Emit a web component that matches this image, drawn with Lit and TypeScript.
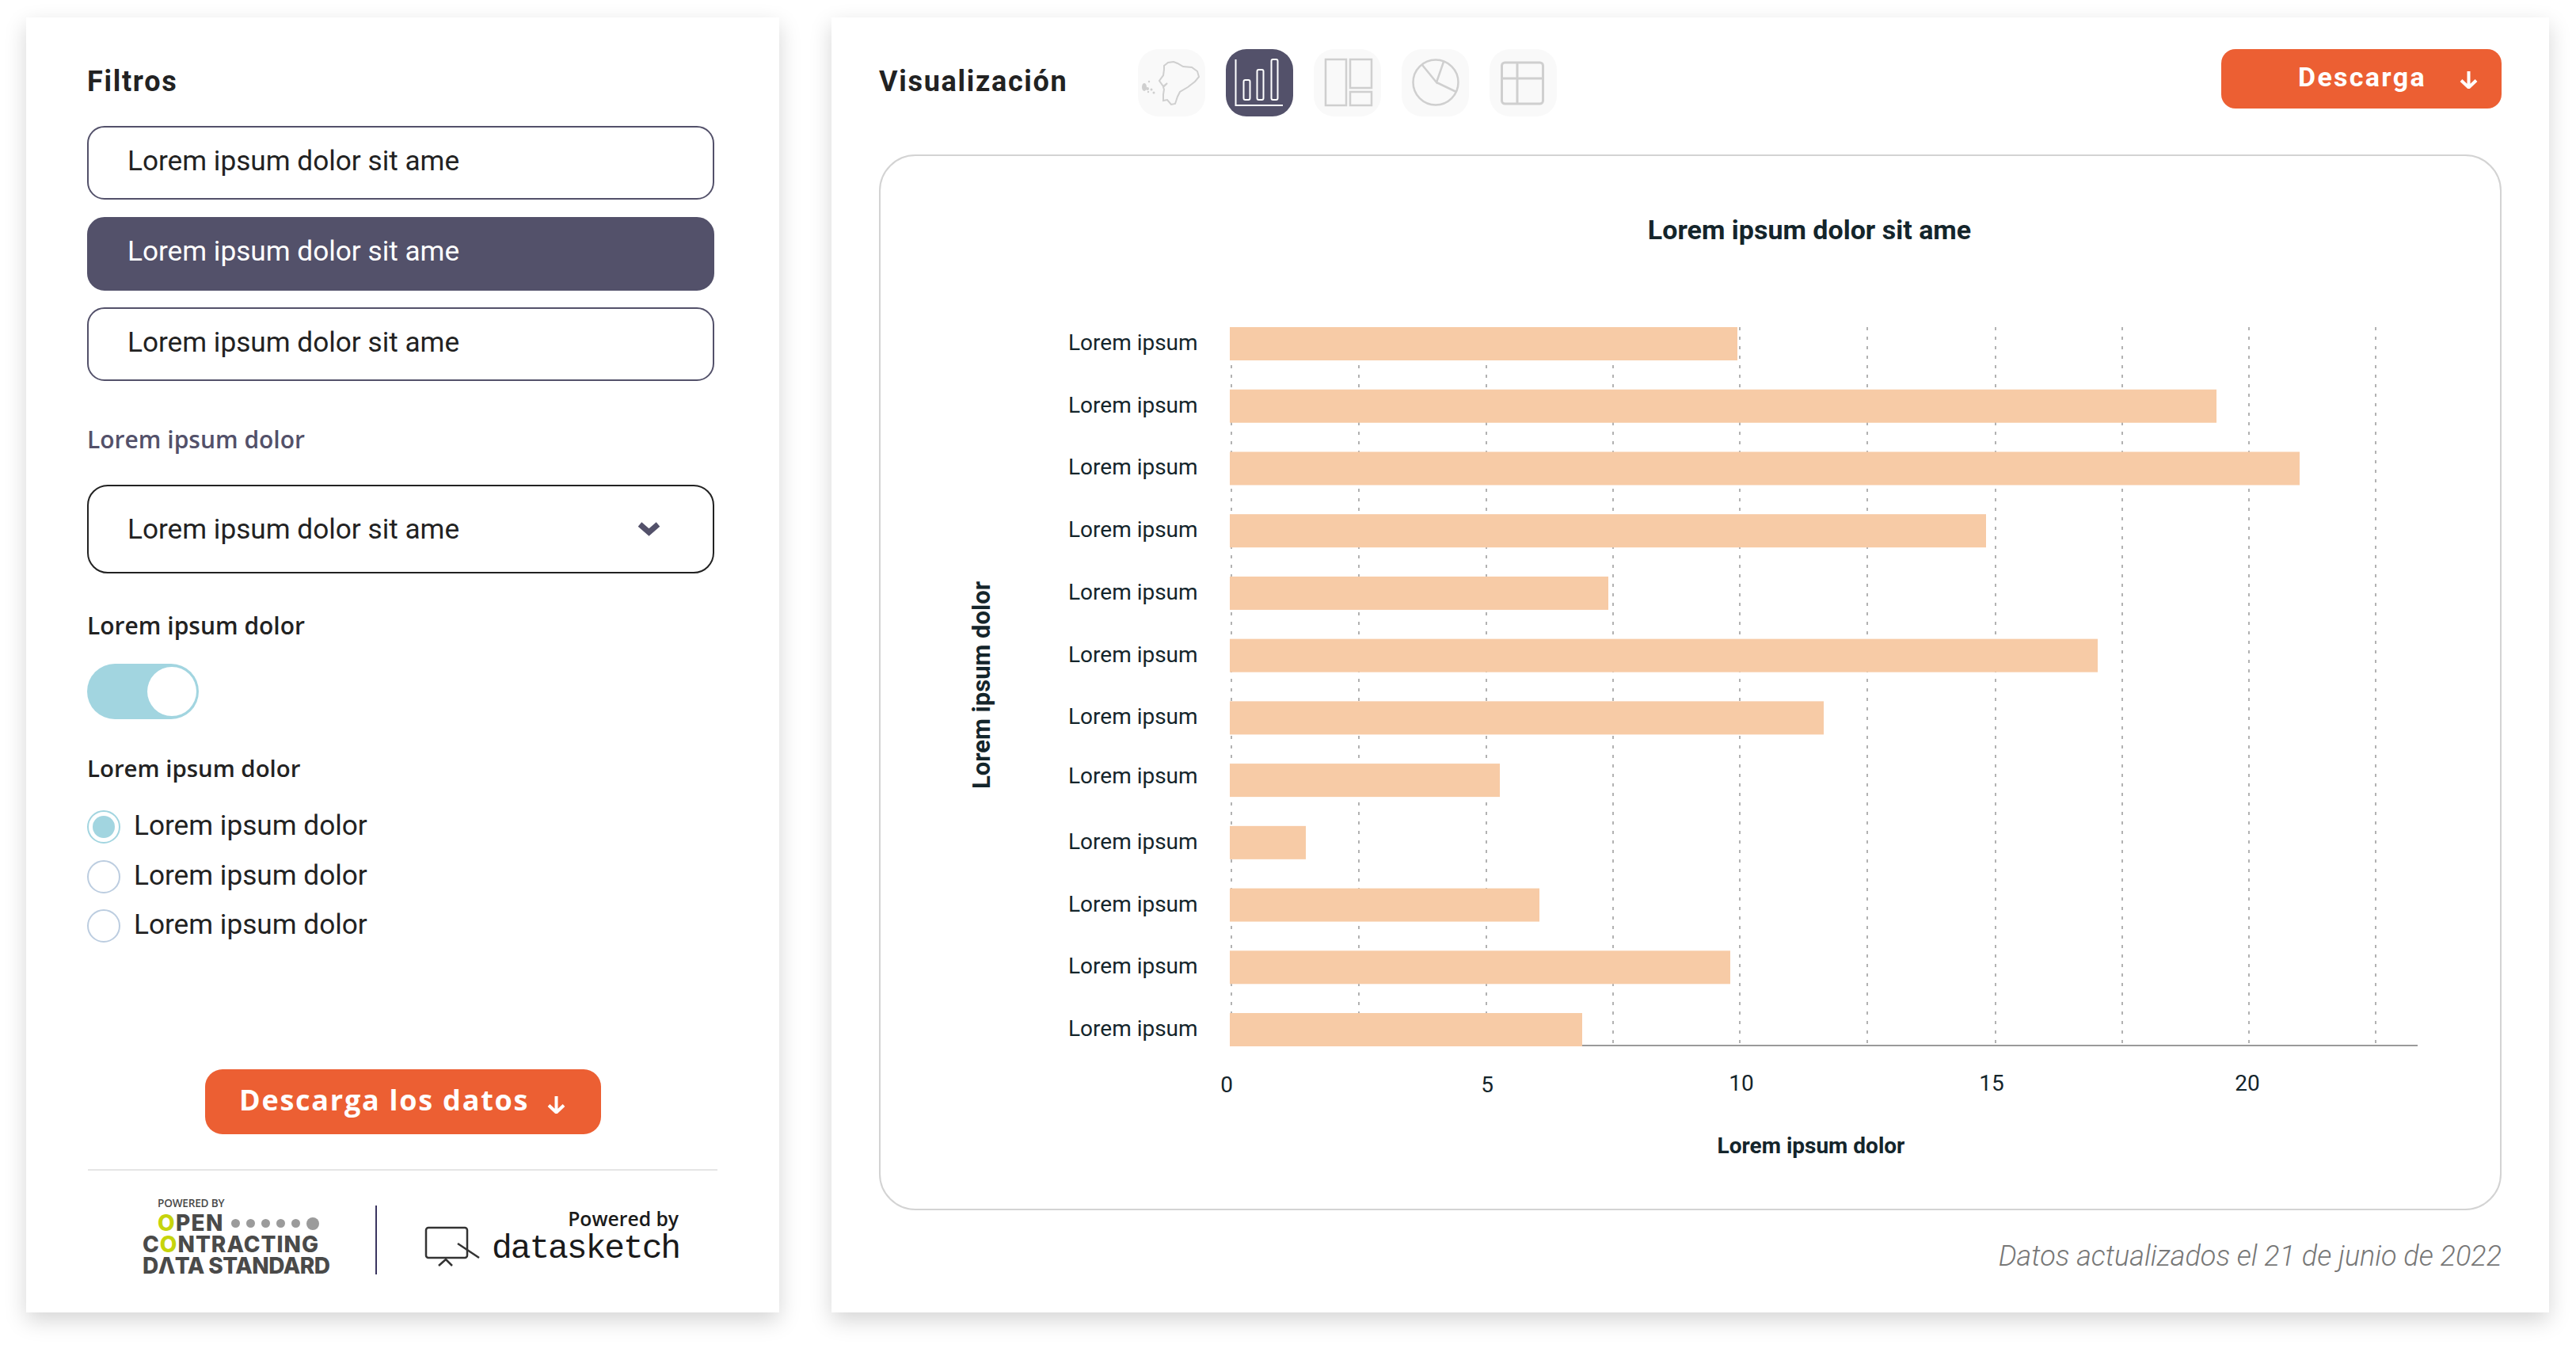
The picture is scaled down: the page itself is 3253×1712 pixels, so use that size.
import { LitElement, html, css, svg } from "lit";
import { customElement } from "lit/decorators.js";

const BAR_ENDS = [2194, 2799, 2904, 2508, 2031, 2649, 2303, 1894, 1649, 1944, 2185, 1998];
const GRID_XS = [1555, 1716, 1877, 2037, 2197, 2358, 2520, 2680, 2840, 3000];
const TICKS: [string, number, number][] = [["0", 1549, 1379], ["5", 1878, 1379], ["10", 2199, 1377], ["15", 2515, 1377], ["20", 2838, 1377]];

// chart svg origin is the top-left corner of the chart box (1110, 195)
const OX = 1110;
const OY = 195;

const downArrow = html`<svg class="arrow" viewBox="0 0 23 22"><path d="M11.500 0v19M2 11.500l9.500 9 9.500-9" fill="none" stroke="#fff" stroke-width="4"/></svg>`;

@customElement("app-root")
export class AppRoot extends LitElement {
  static styles = css`
    :host {
      display: flex;
      gap: 66px;
      width: 3253px;
      height: 1712px;
      box-sizing: border-box;
      padding: 22px 34px 55px 33px;
      background: #fff;
      font-family: "Roboto", sans-serif;
      color: #222;
      overflow: hidden;
    }
    .card {
      background: #fff;
      box-shadow: 0 10px 26px rgba(0, 0, 0, 0.17);
      box-sizing: border-box;
      display: flex;
      flex-direction: column;
    }
    .filters {
      width: 951px;
      padding: 59px 82px 0 77px;
    }
    .main {
      width: 2169px;
      padding: 40px 60px 0 60px;
    }
    h2 {
      margin: 0;
      font-size: 36px;
      line-height: 44px;
      font-weight: 700;
      letter-spacing: 1.7px;
      color: #222;
    }
    .options {
      display: flex;
      flex-direction: column;
      gap: 21.5px;
      margin-top: 34px;
    }
    .option {
      height: 93px;
      box-sizing: border-box;
      border: 2px solid #53516a;
      border-radius: 22px;
      padding-left: 49px;
      display: flex;
      align-items: center;
      font-size: 35.2px;
      padding-bottom: 6px;
    }
    .option.active {
      background: #53516a;
      color: #fff;
    }
    .label {
      font-family: "Open Sans", sans-serif;
      font-size: 30px;
      line-height: 40px;
      font-weight: 600;
    }
    .label.muted {
      color: #53516a;
      margin-top: 54px;
    }
    .label.small {
      font-size: 29.4px;
    }
    .select {
      margin-top: 37px;
      height: 112px;
      box-sizing: border-box;
      border: 2.5px solid #222;
      border-radius: 26px;
      padding: 0 66px 0 49px;
      display: flex;
      align-items: center;
      justify-content: space-between;
      font-size: 35.2px;
    }
    .select svg {
      width: 29px;
      height: 18px;
    }
    .toggle {
      margin-top: 28px;
      width: 141px;
      height: 70px;
      box-sizing: border-box;
      border-radius: 35px;
      background: #a2d5e0;
      padding: 4px 3px;
      display: flex;
      justify-content: flex-end;
    }
    .knob {
      width: 62px;
      height: 62px;
      border-radius: 50%;
      background: #fff;
    }
    .radios {
      margin-top: 33px;
      display: flex;
      flex-direction: column;
      gap: 20.5px;
    }
    .radio {
      display: flex;
      align-items: center;
      gap: 17px;
      height: 42px;
      font-size: 35.2px;
    }
    .radio span:last-child {
      padding-bottom: 4px;
    }
    .dot {
      width: 42px;
      height: 42px;
      box-sizing: border-box;
      border: 2.5px solid #bccde0;
      border-radius: 50%;
      padding: 5px;
    }
    .dot.on {
      border-color: #a2d5e0;
    }
    .dot.on::after {
      content: "";
      display: block;
      width: 100%;
      height: 100%;
      border-radius: 50%;
      background: #a2d5e0;
    }
    .btn {
      background: #ec5f33;
      color: #fff;
      display: flex;
      align-items: center;
      font-weight: 700;
    }
    .btn .arrow {
      width: 23px;
      height: 22px;
      flex: none;
    }
    .btn-data {
      margin: 160px 0 0 149px;
      width: 500px;
      height: 82px;
      border-radius: 22px;
      box-sizing: border-box;
      padding: 0 0 6px 43px;
      gap: 23px;
      font-family: "Open Sans", sans-serif;
      font-size: 36px;
      letter-spacing: 1.75px;
    }
    .btn-data .arrow {
      margin-top: 14px;
    }
    .rule {
      margin: 44px -4px 0 1px;
      height: 2px;
      background: #e5e5e5;
    }
    .brands {
      display: flex;
      align-items: flex-start;
      margin-top: 36px;
      margin-left: 68px;
    }
    .ocds {
      width: 246px;
      margin-left: 2px;
      margin-right: 48px;
      color: #4a4a49;
      font-family: "Inter", sans-serif;
      font-weight: 800;
    }
    .ocds .by {
      font-family: "Open Sans", sans-serif;
      font-size: 13.6px;
      line-height: 17px;
      font-weight: 600;
      letter-spacing: -0.2px;
      margin: -4px 0 0 19px;
      height: 21px;
    }
    .ocds .line {
      font-size: 28px;
      line-height: 27px;
      letter-spacing: -0.5px;
      height: 27px;
      display: flex;
      align-items: center;
      white-space: nowrap;
    }
    .ocds .line.first {
      margin-left: 19px;
      gap: 9px;
      letter-spacing: 1.3px;
    }
    .ocds .line.wide {
      letter-spacing: 1px;
    }
    .ocds b {
      color: #c6d40c;
      font-weight: 800;
    }
    .dots {
      display: flex;
      align-items: center;
      gap: 8px;
    }
    .dots i {
      width: 11px;
      height: 11px;
      border-radius: 50%;
      background: #9b9b9b;
    }
    .dots i:last-child {
      width: 16px;
      height: 16px;
    }
    .sep {
      margin-top: 8px;
      width: 2px;
      height: 87px;
      background: #3a3560;
    }
    .ds {
      margin-left: 60px;
      display: flex;
      align-items: flex-start;
      gap: 15px;
    }
    .ds svg {
      width: 70px;
      height: 54px;
      margin-top: 34px;
    }
    .ds-text {
      margin-top: 10px;
      width: 236px;
      text-align: right;
      color: #1a1a1a;
    }
    .ds-by {
      font-family: "Open Sans", sans-serif;
      font-weight: 600;
      font-size: 24.700px;
      line-height: 30px;
    }
    .ds-name {
      font-family: "Liberation Mono", monospace;
      font-size: 43px;
      line-height: 46px;
      letter-spacing: -2.1px;
      white-space: nowrap;
    }
    .head {
      display: flex;
      align-items: center;
      height: 75px;
      flex: none;
    }
    .head h2 {
      width: 327px;
      padding-top: 7px;
    }
    .tabs {
      display: flex;
      gap: 26px;
      align-self: flex-start;
    }
    .tab {
      width: 85px;
      height: 85px;
      border-radius: 26px;
      background: #f9f9f9;
    }
    .tab.active {
      background: #53516a;
    }
    .tab svg {
      display: block;
      width: 85px;
      height: 85px;
    }
    .btn-top {
      margin-left: auto;
      width: 354px;
      height: 75px;
      border-radius: 18px;
      box-sizing: border-box;
      padding: 0 30px 6px 97px;
      justify-content: space-between;
      font-size: 34px;
      letter-spacing: 2.3px;
    }
    .btn-top .arrow {
      margin-top: 8px;
    }
    .chart {
      margin-top: 58px;
      width: 2049px;
      height: 1333px;
      box-sizing: border-box;
      border: 2.5px solid #d3d3d3;
      border-radius: 46px;
      flex: none;
    }
    .chart svg {
      display: block;
      margin: -2.5px;
      width: 2049px;
      height: 1333px;
    }
    .chart text {
      font-family: "Roboto", sans-serif;
      fill: #14252b;
      font-size: 28px;
    }
    .chart .bold {
      font-weight: 700;
    }
    .chart .title {
      font-size: 34px;
    }
    .chart .axis-y {
      font-size: 31px;
    }
    .updated {
      margin-top: 36px;
      text-align: right;
      font-style: italic;
      font-weight: 300;
      font-size: 36px;
      line-height: 44px;
      color: #777;
    }
  `;

  private renderChart() {
    return html`<svg viewBox="0 0 2049 1333">
      ${GRID_XS.map(
        (x) => svg`<line x1=${x - OX} x2=${x - OX} y1=${413 - OY} y2=${1320 - OY} stroke="#999" stroke-width="1.500" stroke-dasharray="4 8"/>`
      )}
      <line x1=${1553 - OX} x2=${3053 - OX} y1=${1320 - OY} y2=${1320 - OY} stroke="#9a9a9a" stroke-width="2"/>
      ${BAR_ENDS.map((end, i) => {
        const cy = 434 + i * 78.73;
        // the eighth label sits a little high in the design
        const labelY = cy + 8 - (i === 7 ? 4 : 0);
        return svg`
          <rect x=${1553 - OX} y=${cy - 21 - OY} width=${end - 1553} height="42" fill="#f7cba6"/>
          <text x=${1349 - OX} y=${labelY - OY}>Lorem ipsum</text>`;
      })}
      ${TICKS.map(
        ([t, x, y]) => svg`<text x=${x - OX} y=${y - OY} text-anchor="middle">${t}</text>`
      )}
      <text class="bold title" x=${2285 - OX} y=${302 - OY} text-anchor="middle">Lorem ipsum dolor sit ame</text>
      <text class="bold" x=${2287 - OX} y=${1456 - OY} text-anchor="middle">Lorem ipsum dolor</text>
      <text class="bold axis-y" transform="translate(${1250 - OX} ${865 - OY}) rotate(-90)" text-anchor="middle">Lorem ipsum dolor</text>
    </svg>`;
  }

  render() {
    return html`
      <section class="card filters">
        <h2>Filtros</h2>
        <div class="options">
          <div class="option">Lorem ipsum dolor sit ame</div>
          <div class="option active">Lorem ipsum dolor sit ame</div>
          <div class="option">Lorem ipsum dolor sit ame</div>
        </div>
        <div class="label muted">Lorem ipsum dolor</div>
        <div class="select">
          <span>Lorem ipsum dolor sit ame</span>
          <svg viewBox="0 0 29 18"><path d="M3 3l11.500 10L26 3" fill="none" stroke="#53516a" stroke-width="7"/></svg>
        </div>
        <div class="label" style="margin-top:46px">Lorem ipsum dolor</div>
        <div class="toggle"><div class="knob"></div></div>
        <div class="label small" style="margin-top:42px">Lorem ipsum dolor</div>
        <div class="radios">
          <div class="radio"><span class="dot on"></span><span>Lorem ipsum dolor</span></div>
          <div class="radio"><span class="dot"></span><span>Lorem ipsum dolor</span></div>
          <div class="radio"><span class="dot"></span><span>Lorem ipsum dolor</span></div>
        </div>
        <div class="btn btn-data">Descarga los datos ${downArrow}</div>
        <div class="rule"></div>
        <div class="brands">
          <div class="ocds">
            <div class="by">POWERED BY</div>
            <div class="line first">
              <span><b>O</b>PEN</span>
              <span class="dots"><i></i><i></i><i></i><i></i><i></i><i></i></span>
            </div>
            <div class="line wide"><span>C<b>O</b>NTRACTING</span></div>
            <div class="line"><span>DΛTA STANDARD</span></div>
          </div>
          <div class="sep"></div>
          <div class="ds">
            <svg viewBox="0 0 70 54" fill="none" stroke="#333" stroke-width="2.500">
              <rect x="2" y="2" width="52" height="38" rx="3"/>
              <path d="M42 22l27 18M18 50l9-8 8 8"/>
            </svg>
            <div class="ds-text">
              <div class="ds-by">Powered by</div>
              <div class="ds-name">datasketch</div>
            </div>
          </div>
        </div>
      </section>
      <section class="card main">
        <div class="head">
          <h2>Visualización</h2>
          <div class="tabs">
            <div class="tab">
              <svg viewBox="0 0 85 85" fill="none" stroke="#cfcfcf" stroke-width="2">
                <path d="M33 21l5-4 7-1 5 2 7 4 11 1 7 5 2 7-5 6-9 7-10 6-3 6-3 9-5 1-5-6-5 1 0-8 1-6-1-3 5-5-5 4-5-7 5-7 1-7z"/>
                <g fill="#cfcfcf" stroke="none">
                  <ellipse cx="8" cy="48" rx="3" ry="5"/>
                  <circle cx="12" cy="50" r="2"/>
                  <circle cx="14" cy="41" r="1.200"/>
                  <circle cx="17" cy="51" r="1.500"/>
                  <circle cx="20" cy="55" r="1.500"/>
                  <circle cx="13" cy="54" r="1.200"/>
                </g>
              </svg>
            </div>
            <div class="tab active">
              <svg viewBox="0 0 85 85" fill="none" stroke="#fff" stroke-width="2">
                <path d="M12.500 13v58H72"/>
                <rect x="22.500" y="39" width="8" height="25" rx="2"/>
                <rect x="39.500" y="26" width="8" height="38" rx="2"/>
                <rect x="57.500" y="13" width="8" height="51" rx="2"/>
              </svg>
            </div>
            <div class="tab">
              <svg viewBox="0 0 85 85" fill="none" stroke="#cfcfcf" stroke-width="2.500">
                <rect x="15" y="13" width="26" height="58"/>
                <rect x="46" y="13" width="27" height="36"/>
                <rect x="46" y="54" width="27" height="17"/>
              </svg>
            </div>
            <div class="tab">
              <svg viewBox="0 0 85 85" fill="none" stroke="#cfcfcf" stroke-width="2.500">
                <circle cx="43" cy="42" r="28.500"/>
                <path d="M26 20l18 22 9-26M44 42l25 12"/>
              </svg>
            </div>
            <div class="tab">
              <svg viewBox="0 0 85 85" fill="none" stroke="#cfcfcf" stroke-width="3">
                <rect x="15.500" y="17" width="52" height="52" rx="4"/>
                <path d="M35 17v52M15.500 37h52"/>
              </svg>
            </div>
          </div>
          <div class="btn btn-top"><span>Descarga</span>${downArrow}</div>
        </div>
        <div class="chart">${this.renderChart()}</div>
        <div class="updated">Datos actualizados el 21 de junio de 2022</div>
      </section>
    `;
  }
}
